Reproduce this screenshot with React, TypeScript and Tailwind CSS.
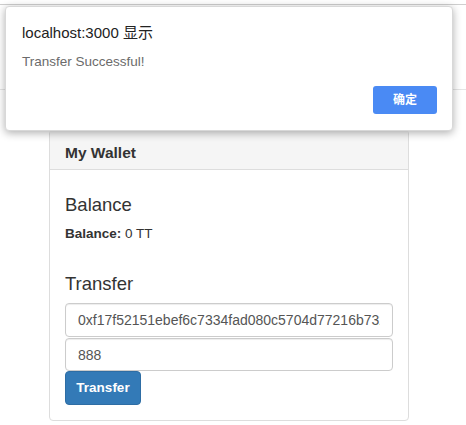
import React from 'react';

const SANS = "font-['Liberation_Sans','Noto_Sans_CJK_SC',Arial,sans-serif]";

function AlertDialog() {
  return (
    <div className="absolute left-[5px] top-[6px] w-[448px] h-[125px] rounded-[4px] bg-white shadow-[0_2px_9px_rgba(0,0,0,0.32)] border border-[#d8d8d8] flex flex-col pl-[16px] pr-[15px] pt-[16px]">
      <p className="text-[15px] leading-[20px] text-[#222]">localhost:3000 显示</p>
      <p className="mt-[10px] text-[13.5px] leading-[18px] text-[#6b6b6b]">Transfer Successful!</p>
      <div className="mt-[15px] flex justify-end">
        <button className="w-[64px] h-[28px] rounded-[3px] bg-[#4a8af4] text-white text-[12px] font-bold">
          确定
        </button>
      </div>
    </div>
  );
}

export default function App() {
  return (
    <main className={`relative w-[466px] h-[425px] overflow-hidden bg-white ${SANS}`}>
      <div className="h-[4px]" />
      <div className="h-px bg-[#cfcfcf]" />
      <div className="h-[85px] border-b border-[#e5e5e5]" />

      <section className="mt-[40px] ml-[49px] w-[360px] rounded-[4px] border border-[#dddddd] bg-white">
        <div className="h-[39px] flex items-center pt-[5px] px-[15px] bg-[#f5f5f5] border-b border-[#dddddd]">
          <h2 className="text-[15.5px] font-bold text-[#333]">My Wallet</h2>
        </div>
        <div className="px-[15px] pt-[16px] pb-[15px]">
          <h3 className="mt-[8px] text-[18.5px] leading-[22px] text-[#333]">Balance</h3>
          <p className="mt-[8px] text-[13.5px] leading-[20px] text-[#333]">
            <b>Balance:</b> 0 TT
          </p>

          <h3 className="mt-[29px] text-[18.5px] leading-[22px] text-[#333]">Transfer</h3>
          <input
            readOnly
            value="0xf17f52151ebef6c7334fad080c5704d77216b732"
            className="mt-[8px] block w-full h-[34px] px-[12px] rounded-[4px] border border-[#cccccc] text-[14px] text-[#555] shadow-[inset_0_1px_1px_rgba(0,0,0,0.075)] outline-none"
          />
          <input
            readOnly
            value="888"
            className="mt-px block w-full h-[33px] px-[12px] rounded-[4px] border border-[#cccccc] text-[14px] text-[#555] shadow-[inset_0_1px_1px_rgba(0,0,0,0.075)] outline-none"
          />
          <button className="block w-[76px] h-[34px] rounded-[4px] bg-[#337ab7] border border-[#2e6da4] text-white text-[13.5px] font-bold">
            Transfer
          </button>
        </div>
      </section>

      <AlertDialog />
    </main>
  );
}
